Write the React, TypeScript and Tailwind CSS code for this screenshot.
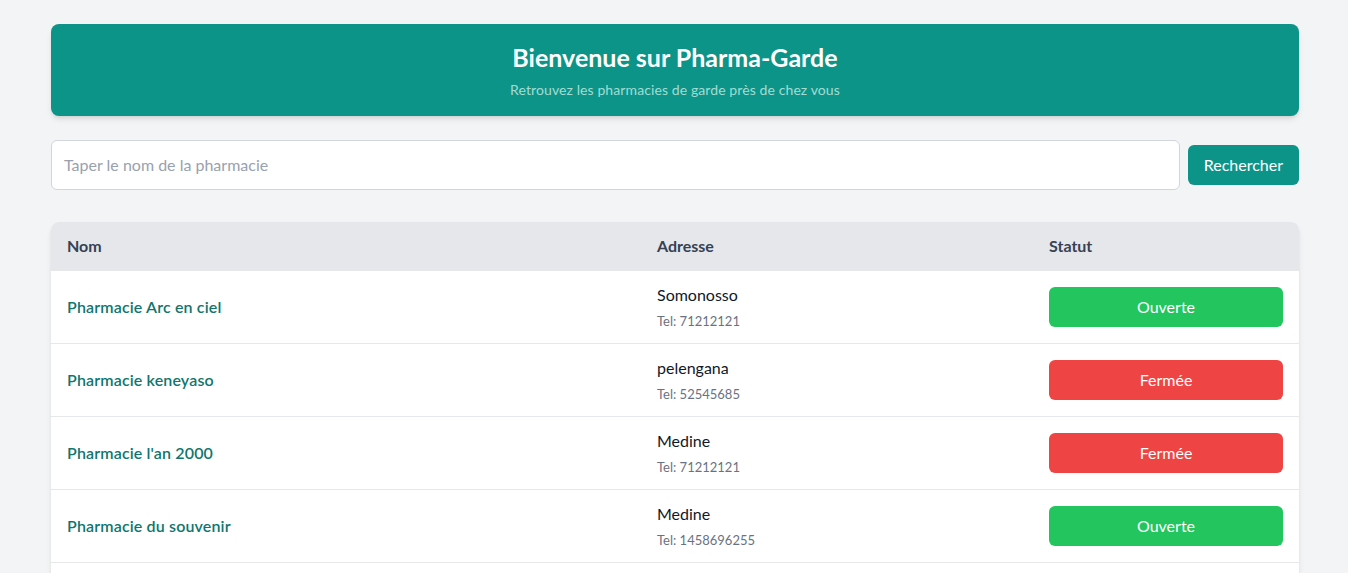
const pharmacies = [
  { nom: 'Pharmacie Arc en ciel', adresse: 'Somonosso', tel: '71212121', ouverte: true },
  { nom: 'Pharmacie keneyaso', adresse: 'pelengana', tel: '52545685', ouverte: false },
  { nom: "Pharmacie l'an 2000", adresse: 'Medine', tel: '71212121', ouverte: false },
  { nom: 'Pharmacie du souvenir', adresse: 'Medine', tel: '1458696255', ouverte: true },
  { nom: 'Pharmacie Kenedougou', adresse: 'Wayerma', tel: '76543210', ouverte: true },
];

export default function App() {
  return (
    <div className="min-h-screen bg-gray-100 font-['Lato','Noto_Sans',sans-serif]">
      <div className="mx-auto w-[1248px] translate-x-px py-6">
        {/* En-tête */}
        <header className="rounded-lg bg-[#0d9488] p-4 text-center shadow-md">
          <h1 className="mb-2 pt-0.5 text-[25px] leading-[30px] font-bold text-white">Bienvenue sur Pharma-Garde</h1>
          <p className="text-sm tracking-[0.1px] text-[#a3dcd2]">Retrouvez les pharmacies de garde près de chez vous</p>
        </header>

        {/* Recherche */}
        <div className="mt-6 flex items-center gap-2">
          <input
            type="text"
            placeholder="Taper le nom de la pharmacie"
            className="flex-1 rounded-md border border-gray-300 bg-white px-3 py-3 text-base leading-6 text-gray-900 placeholder:text-gray-400 focus:outline-none"
          />
          <button className="rounded-md bg-[#0d9488] px-4 py-2 text-base leading-6 text-white">
            Rechercher
          </button>
        </div>

        {/* Liste */}
        <div className="mt-8 overflow-hidden rounded-lg bg-white shadow-md">
          <table className="w-full table-fixed border-collapse text-left">
            <colgroup>
              <col className="w-[590px]" />
              <col className="w-[392px]" />
              <col className="w-[266px]" />
            </colgroup>
            <thead className="bg-gray-200">
              <tr className="border-b border-gray-200">
                <th className="h-12 px-4 text-base font-bold text-gray-700">Nom</th>
                <th className="h-12 px-4 text-base font-bold text-gray-700">Adresse</th>
                <th className="h-12 px-4 text-base font-bold text-gray-700">Statut</th>
              </tr>
            </thead>
            <tbody>
              {pharmacies.map((p) => (
                <tr key={p.nom} className="border-b border-gray-200">
                  <td className="px-4 py-3 align-middle text-base font-semibold tracking-[0.15px] text-[#0f766e]">{p.nom}</td>
                  <td className="px-4 py-3 align-middle">
                    <div className="text-base leading-6 text-gray-900">{p.adresse}</div>
                    <div className="mt-1 text-[13px] leading-5 text-gray-500">Tel: {p.tel}</div>
                  </td>
                  <td className="px-4 py-3 align-middle">
                    <button
                      className={`w-full rounded-md py-2 text-base leading-6 text-white ${
                        p.ouverte ? 'bg-[#22c55e]' : 'bg-[#ef4444]'
                      }`}
                    >
                      {p.ouverte ? 'Ouverte' : 'Fermée'}
                    </button>
                  </td>
                </tr>
              ))}
            </tbody>
          </table>
        </div>
      </div>
    </div>
  );
}
